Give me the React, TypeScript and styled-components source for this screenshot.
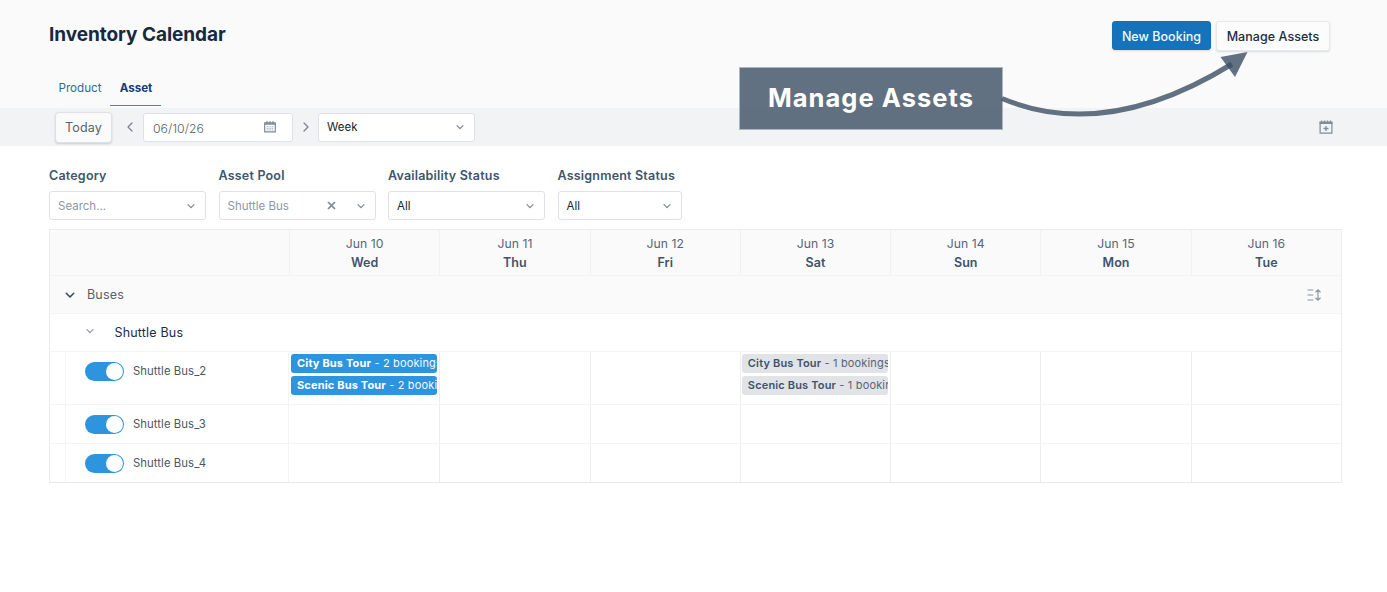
import React from "react";
import styled, { createGlobalStyle } from "styled-components";

const GlobalStyle = createGlobalStyle`
  *, *::before, *::after { box-sizing: border-box; }
  html, body { margin: 0; padding: 0; background: #fff; }
  body {
    font-family: Inter, "Liberation Sans", sans-serif;
    font-size: 13px;
    color: #425466;
    overflow: hidden;
  }
  button { font-family: inherit; }
`;

const Page = styled.main`
  position: relative;
  width: 1387px;
  height: 592px;
  background: #fff;
`;

const Header = styled.header`
  height: 108px;
  padding: 21px 57px 0 49px;
  background: #fafafa;
  display: flex;
  flex-direction: column;
  justify-content: space-between;
`;

const HeaderTop = styled.div`
  display: flex;
  justify-content: space-between;
`;

const Title = styled.h1`
  margin: 0;
  font-size: 19px;
  line-height: 27px;
  font-weight: 700;
  letter-spacing: -0.05px;
  color: #15293f;
`;

const Actions = styled.div`
  display: flex;
  gap: 5px;
`;

const ActionButton = styled.button<{ $primary?: boolean }>`
  width: ${(p) => (p.$primary ? 99 : 114)}px;
  height: ${(p) => (p.$primary ? 29 : 30)}px;
  padding: ${(p) => (p.$primary ? 1 : 0)}px 0 0;
  border-radius: 3px;
  border: 1px solid ${(p) => (p.$primary ? "#1170b8" : "#e6e8ea")};
  background: ${(p) => (p.$primary ? "#1473bb" : "#fcfcfc")};
  color: ${(p) => (p.$primary ? "#f3f8fc" : "#1c2d42")};
  font-size: 12.5px;
  font-weight: ${(p) => (p.$primary ? 500 : 450)};
  letter-spacing: ${(p) => (p.$primary ? 0.02 : 0.05)}px;
  white-space: nowrap;
  box-shadow: 0 1px 2px rgba(40, 55, 75, 0.16);
`;

const Tabs = styled.nav`
  display: flex;
  height: 36px;
  padding-bottom: 2px;
`;

const Tab = styled.a<{ $active?: boolean }>`
  width: ${(p) => (p.$active ? 51 : 61)}px;
  padding-left: 1px;
  text-align: center;
  font-size: ${(p) => (p.$active ? 11.6 : 11.6)}px;
  line-height: 32px;
  font-weight: ${(p) => (p.$active ? 700 : 400)};
  color: ${(p) => (p.$active ? "#123c7c" : "#32689c")};
  border-bottom: ${(p) => (p.$active ? "1px solid #2a8fd8" : "0")};
`;

const Toolbar = styled.div`
  height: 38px;
  padding: 0 54px 0 55px;
  background: #f1f3f4;
  display: flex;
  align-items: center;
`;

const TodayButton = styled.button`
  width: 57px;
  height: 31px;
  padding: 0;
  border: 1px solid #dfe2e5;
  border-radius: 4px;
  background: #fafafa;
  color: #566372;
  font-size: 12.5px;
  letter-spacing: 0.15px;
  box-shadow: 0 1px 2px rgba(40, 55, 75, 0.2);
`;

const Stepper = styled.span<{ $width: number }>`
  width: ${(p) => p.$width}px;
  padding-left: ${(p) => (p.$width > 26 ? 4 : 0)}px;
  display: flex;
  justify-content: center;
  color: #7b8794;
`;

const Field = styled.div<{ $width: number; $muted?: boolean; $right?: number }>`
  width: ${(p) => p.$width}px;
  height: 29px;
  padding: 0 ${(p) => p.$right ?? 9}px 0 8px;
  border: 1px solid #dfe1e7;
  border-radius: 3px;
  background: #fff;
  display: flex;
  align-items: center;
  font-size: 11.5px;
  color: ${(p) => (p.$muted ? "#8d97a3" : "#20262d")};
`;

const FieldText = styled.span<{ $date?: boolean }>`
  flex: 1;
  white-space: nowrap;
  font-size: ${(p) => (p.$date ? 12.3 : 11.5)}px;
  font-weight: ${(p) => (p.$date ? 300 : 400)};
  padding: ${(p) => (p.$date ? "2px 0 0 1px" : "0")};
  color: ${(p) => (p.$date ? "#575f68" : "inherit")};
`;

const ToolbarEnd = styled.span`
  margin-left: auto;
  display: flex;
`;

const ClearSlot = styled.span`
  display: flex;
  margin-right: 21px;
`;

const Filters = styled.section`
  display: flex;
  gap: 12.5px;
  padding: 21px 49px 0;
  height: 83px;
`;

const Filter = styled.div`
  display: flex;
  flex-direction: column;
  gap: 7px;
`;

const FilterLabel = styled.label`
  font-size: 12.5px;
  line-height: 17px;
  font-weight: 600;
  letter-spacing: 0.2px;
  color: #40556d;
  white-space: nowrap;
`;

const Calendar = styled.section`
  width: 1293px;
  margin-left: 49px;
  border: 1px solid #ececee;
  border-bottom-color: #e9e9eb;
`;

const Row = styled.div<{ $height: number; $shade?: boolean; $last?: boolean }>`
  display: grid;
  grid-template-columns: 239px repeat(7, 1fr);
  height: ${(p) => p.$height}px;
  background: ${(p) => (p.$shade ? "#fafafa" : "#fff")};
  border-bottom: ${(p) => (p.$last ? "0" : "1px solid #f3f4f5")};
`;

const HeadCell = styled.div`
  border-left: 1px solid #f0f1f2;
  display: flex;
  flex-direction: column;
  align-items: center;
  padding-top: 4px;
  color: #56657a;
  font-size: 12.2px;
  line-height: 19px;
  letter-spacing: 0.05px;
`;

const DayName = styled.strong`
  font-size: 12.5px;
  line-height: 19px;
  font-weight: 600;
  color: #40526a;
`;

const GroupRow = styled.div<{ $height: number; $shade?: boolean }>`
  height: ${(p) => p.$height}px;
  display: flex;
  align-items: center;
  padding: 0 20px 0 ${(p) => (p.$shade ? 15 : 36)}px;
  background: ${(p) => (p.$shade ? "#fafafa" : "#fff")};
  border-bottom: 1px solid #f3f4f5;
`;

const ChevronSlot = styled.span<{ $raised?: boolean }>`
  display: flex;
  padding-bottom: ${(p) => (p.$raised ? 3 : 0)}px;
`;

const GroupName = styled.span<{ $strong?: boolean }>`
  flex: 1;
  padding-left: ${(p) => (p.$strong ? 20.5 : 12)}px;
  font-size: 12.5px;
  letter-spacing: 0.18px;
  color: ${(p) => (p.$strong ? "#1d2b45" : "#566274")};
`;

const AssetCell = styled.div`
  margin-left: 15px;
  border: 1px solid #f3f4f5;
  border-width: 0 1px 0 1px;
  padding: 10px 0 0 19px;
  display: flex;
  align-items: flex-start;
  gap: 9px;
  font-size: 11.3px;
  line-height: 18px;
  color: #4b5663;
  letter-spacing: 0.08px;
`;

const Switch = styled.span`
  width: 39px;
  height: 19px;
  padding: 1px;
  border-radius: 10px;
  background: #2d94dd;
  display: flex;
  justify-content: flex-end;
`;

const Knob = styled.span`
  width: 17px;
  height: 17px;
  border-radius: 50%;
  background: #fff;
`;

const DayCell = styled.div`
  min-width: 0;
  border-left: 1px solid #ededef;
  padding: 2px 2px 0 1px;
  display: flex;
  flex-direction: column;
  gap: 3px;

  &:nth-child(2) {
    border-left-color: transparent;
  }
`;

const Booking = styled.div<{ $muted?: boolean }>`
  height: 19px;
  flex: none;
  padding-left: 6px;
  border-radius: 3px;
  overflow: hidden;
  white-space: nowrap;
  font-size: 11px;
  line-height: 19px;
  letter-spacing: 0.16px;
  background: ${(p) => (p.$muted ? "#e1e3e7" : "#2d94dd")};
  color: ${(p) => (p.$muted ? "#56657a" : "#f4faff")};

  strong {
    font-weight: ${(p) => (p.$muted ? 600 : 700)};
    color: ${(p) => (p.$muted ? "#40526a" : "#fff")};
  }
`;

const Callout = styled.div`
  position: absolute;
  left: 739px;
  top: 67px;
  width: 264px;
  height: 63px;
  display: flex;
  align-items: center;
  justify-content: center;
  padding-bottom: 2px;
  border: 1px solid rgba(150, 162, 174, 0.75);
  background: rgba(60, 79, 100, 0.8);
  background-clip: padding-box;
  color: #fff;
  font-size: 25.5px;
  font-weight: 700;
  letter-spacing: 1.05px;
  white-space: nowrap;
`;

const ArrowOverlay = styled.svg`
  position: absolute;
  left: 1000px;
  top: 45px;
  pointer-events: none;
`;

const Chevron = ({ color = "#7b8794", size = 8, weight = 1.2 }: { color?: string; size?: number; weight?: number }) => (
  <svg width={size} height={size} viewBox="0 0 8 8" fill="none" stroke={color} strokeWidth={weight} strokeLinecap="round" strokeLinejoin="round">
    <path d="M1 2.6 4 5.6 7 2.6" />
  </svg>
);

const SideChevron = ({ next }: { next?: boolean }) => (
  <svg width="6" height="10" viewBox="0 0 6 10" fill="none" stroke="#76828f" strokeWidth="1.2" strokeLinecap="round" strokeLinejoin="round">
    <path d={next ? "M1 1 5 5 1 9" : "M5 1 1 5 5 9"} />
  </svg>
);

const CalendarIcon = () => (
  <svg width="12" height="12" viewBox="0 0 12 12" fill="none">
    <path d="M.7 1.8h10.6v9H.7z" stroke="#7f8a98" strokeWidth="1.2" />
    <path d="M.7 3h10.6M3 .3v2.2M6 .3v2.2M9 .3v2.2" stroke="#7f8a98" strokeWidth="1.4" />
    <path d="M2.6 5.8h6.8M2.6 7.4h6.8M2.6 9h6.8" stroke="#a7afb9" strokeWidth=".9" strokeDasharray="1.3 .5" />
  </svg>
);

const CalendarPlusIcon = () => (
  <svg width="14" height="14" viewBox="0 0 14 14" fill="none" stroke="#818c99">
    <path d="M1.1 2h11.8v11.1H1.1z" strokeWidth="1.2" />
    <path d="M.6 3h12.8" strokeWidth="2" />
    <path d="M2.6.5v2M5.6.5v2M8.5.5v2M11.4.5v2" strokeWidth="1.3" />
    <path d="M7 6v5M4.5 8.5h5" strokeWidth="1.3" />
  </svg>
);

const ClearIcon = () => (
  <svg width="9" height="9" viewBox="0 0 9 9" fill="none" stroke="#7c8896" strokeWidth="1.7">
    <path d="M1 1 8 8M8 1 1 8" />
  </svg>
);

const SortIcon = () => (
  <svg width="14" height="12" viewBox="0 0 14 12" fill="none" stroke="#8a94a1" strokeWidth="1.2">
    <path d="M.5 1h5.8M.5 6h5.8M.5 11h5.8M11 1v10M8.5 3.2 11 .8l2.5 2.4M8.5 8.8l2.5 2.4 2.5-2.4" />
  </svg>
);

const days = [
  ["Jun 10", "Wed"],
  ["Jun 11", "Thu"],
  ["Jun 12", "Fri"],
  ["Jun 13", "Sat"],
  ["Jun 14", "Sun"],
  ["Jun 15", "Mon"],
  ["Jun 16", "Tue"],
];

type Item = { tour: string; count: number };
type Asset = { name: string; height: number; bookings: Record<string, Item[]> };

const assets: Asset[] = [
  {
    name: "Shuttle Bus_2",
    height: 53,
    bookings: {
      Wed: [{ tour: "City Bus Tour", count: 2 }, { tour: "Scenic Bus Tour", count: 2 }],
      Sat: [{ tour: "City Bus Tour", count: 1 }, { tour: "Scenic Bus Tour", count: 1 }],
    },
  },
  { name: "Shuttle Bus_3", height: 39, bookings: {} },
  { name: "Shuttle Bus_4", height: 38, bookings: {} },
];

export default function App() {
  return (
    <Page>
      <GlobalStyle />
      <Header>
        <HeaderTop>
          <Title>Inventory Calendar</Title>
          <Actions>
            <ActionButton $primary>New Booking</ActionButton>
            <ActionButton>Manage Assets</ActionButton>
          </Actions>
        </HeaderTop>
        <Tabs>
          <Tab>Product</Tab>
          <Tab $active>Asset</Tab>
        </Tabs>
      </Header>

      <Toolbar>
        <TodayButton>Today</TodayButton>
        <Stepper $width={31}><SideChevron /></Stepper>
        <Field $width={150} $right={16}>
          <FieldText $date>06/10/26</FieldText>
          <CalendarIcon />
        </Field>
        <Stepper $width={25}><SideChevron next /></Stepper>
        <Field $width={157} $right={10}>
          <FieldText>Week</FieldText>
          <Chevron />
        </Field>
        <ToolbarEnd><CalendarPlusIcon /></ToolbarEnd>
      </Toolbar>

      <Filters>
        <Filter>
          <FilterLabel>Category</FilterLabel>
          <Field $width={157} $muted $right={10}><FieldText>Search...</FieldText><Chevron /></Field>
        </Filter>
        <Filter>
          <FilterLabel>Asset Pool</FilterLabel>
          <Field $width={157} $muted $right={10}>
            <FieldText>Shuttle Bus</FieldText>
            <ClearSlot><ClearIcon /></ClearSlot>
            <Chevron />
          </Field>
        </Filter>
        <Filter>
          <FilterLabel>Availability Status</FilterLabel>
          <Field $width={157} $right={10}><FieldText>All</FieldText><Chevron /></Field>
        </Filter>
        <Filter>
          <FilterLabel>Assignment Status</FilterLabel>
          <Field $width={124} $right={10}><FieldText>All</FieldText><Chevron /></Field>
        </Filter>
      </Filters>

      <Calendar>
        <Row $height={46} $shade>
          <span />
          {days.map(([date, day]) => (
            <HeadCell key={day}>
              <span>{date}</span>
              <DayName>{day}</DayName>
            </HeadCell>
          ))}
        </Row>
        <GroupRow $height={38} $shade>
          <ChevronSlot><Chevron color="#33475e" size={10} weight={1.2} /></ChevronSlot>
          <GroupName>Buses</GroupName>
          <SortIcon />
        </GroupRow>
        <GroupRow $height={38}>
          <ChevronSlot $raised><Chevron color="#8893a1" /></ChevronSlot>
          <GroupName $strong>Shuttle Bus</GroupName>
        </GroupRow>
        {assets.map((asset, i) => (
          <Row key={asset.name} $height={asset.height} $last={i === assets.length - 1}>
            <AssetCell>
              <Switch><Knob /></Switch>
              <span>{asset.name}</span>
            </AssetCell>
            {days.map(([, day]) => (
              <DayCell key={day}>
                {(asset.bookings[day] ?? []).map((b) => (
                  <Booking key={b.tour} $muted={day === "Sat"}>
                    <strong>{b.tour}</strong> - {b.count} bookings
                  </Booking>
                ))}
              </DayCell>
            ))}
          </Row>
        ))}
      </Calendar>

      <Callout>Manage Assets</Callout>
      <ArrowOverlay width="260" height="80" viewBox="1000 45 260 80">
        <path d="M1002 98.5Q1106 142 1232 64" fill="none" stroke="rgba(60,79,100,.8)" strokeWidth="5" />
        <path d="M1247.5 52 1220.5 57 1235 77Z" fill="rgba(60,79,100,.8)" />
      </ArrowOverlay>
    </Page>
  );
}
